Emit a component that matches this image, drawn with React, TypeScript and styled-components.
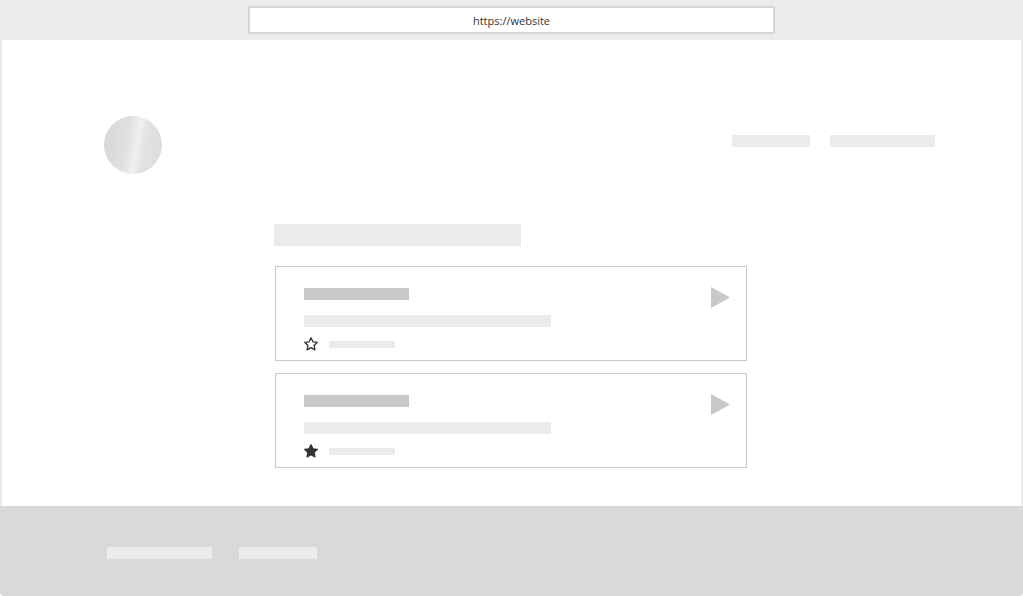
import styled, { createGlobalStyle } from "styled-components";

const GlobalStyle = createGlobalStyle`
  html, body {
    margin: 0;
    padding: 0;
    background: #ffffff;
  }
  body {
    font-family: "Open Sans", "Liberation Sans", sans-serif;
  }
`;

const Frame = styled.div`
  width: 1023px;
  height: 596px;
  display: flex;
  flex-direction: column;
  overflow: hidden;
`;

const BrowserBar = styled.header`
  height: 40px;
  background: #ebebeb;
  display: flex;
  justify-content: center;
  align-items: flex-start;
  padding-top: 6px;
  box-sizing: border-box;
`;

const AddressBox = styled.div`
  width: 527px;
  height: 28px;
  box-sizing: border-box;
  background: #ffffff;
  border: 2px solid #d6d6d6;
  display: flex;
  align-items: center;
  justify-content: center;
  font-size: 11px;
  color: #333333;
`;

const Page = styled.main`
  flex: 1;
  background: #ffffff;
  border-left: 2px solid #ebebeb;
  border-right: 2px solid #ebebeb;
  display: flex;
  flex-direction: column;
`;

const SiteHeader = styled.div`
  display: flex;
  justify-content: space-between;
  align-items: center;
  padding: 76px 86px 0 102px;
`;

const Logo = styled.div`
  width: 58px;
  height: 58px;
  border-radius: 50%;
  background: linear-gradient(
    100deg,
    #d6d6d6 0%,
    #e0e0e0 40%,
    #f0f0f0 56%,
    #e2e2e2 68%,
    #dadada 100%
  );
`;

const Nav = styled.nav`
  display: flex;
  gap: 20px;
  margin-bottom: 8px;
`;

const Bar = styled.div<{ $w: number; $h?: number; $tone?: string }>`
  width: ${({ $w }) => $w}px;
  height: ${({ $h }) => $h ?? 12}px;
  background: ${({ $tone }) => $tone ?? "#ebebeb"};
  flex-shrink: 0;
`;

const Content = styled.section`
  width: 473px;
  margin: 50px 0 0 272px;
  display: flex;
  flex-direction: column;
`;

const CardList = styled.div`
  display: flex;
  flex-direction: column;
  gap: 12px;
  margin-top: 20px;
  padding-left: 1px;
`;

const Card = styled.article`
  height: 95px;
  box-sizing: border-box;
  border: 1px solid #c8c8c8;
  padding: 21px 16px 0 28px;
  display: flex;
  justify-content: space-between;
  align-items: flex-start;
`;

const CardBody = styled.div`
  display: flex;
  flex-direction: column;
`;

const Description = styled(Bar)`
  margin-top: 15px;
`;

const MetaRow = styled.div`
  display: flex;
  align-items: center;
  gap: 10px;
  margin-top: 9px;
  margin-left: -1px;
`;

const PlayIcon = styled.svg`
  width: 19px;
  height: 21px;
  margin-top: -1px;
`;

const Footer = styled.footer`
  height: 90px;
  background: #d9d9d9;
  display: flex;
  align-items: center;
  gap: 27px;
  padding: 4px 0 0 107px;
  box-sizing: border-box;
  border-radius: 0 0 4px 4px;
`;

function StarIcon({ filled }: { filled: boolean }) {
  return (
    <svg width="16" height="16" viewBox="0 0 24 24">
      <path
        d="M12 2.6l2.9 6.1 6.6.8-4.9 4.6 1.3 6.6L12 17.4l-5.9 3.3 1.3-6.6-4.9-4.6 6.6-.8z"
        fill={filled ? "#333333" : "none"}
        stroke="#333333"
        strokeWidth={2}
        strokeLinejoin="round"
      />
    </svg>
  );
}

const items = [{ starred: false }, { starred: true }];

export default function App() {
  return (
    <>
      <GlobalStyle />
      <Frame>
        <BrowserBar>
          <AddressBox>https://website</AddressBox>
        </BrowserBar>
        <Page>
          <SiteHeader>
            <Logo />
            <Nav>
              <Bar $w={78} />
              <Bar $w={105} />
            </Nav>
          </SiteHeader>
          <Content>
            <Bar $w={247} $h={22} />
            <CardList>
              {items.map((item, i) => (
                <Card key={i}>
                  <CardBody>
                    <Bar $w={105} $tone="#c8c8c8" />
                    <Description $w={247} />
                    <MetaRow>
                      <StarIcon filled={item.starred} />
                      <Bar $w={66} $h={7} />
                    </MetaRow>
                  </CardBody>
                  <PlayIcon viewBox="0 0 19 21">
                    <polygon points="0,0 19,10.5 0,21" fill="#c8c8c8" />
                  </PlayIcon>
                </Card>
              ))}
            </CardList>
          </Content>
        </Page>
        <Footer>
          <Bar $w={105} />
          <Bar $w={78} />
        </Footer>
      </Frame>
    </>
  );
}
